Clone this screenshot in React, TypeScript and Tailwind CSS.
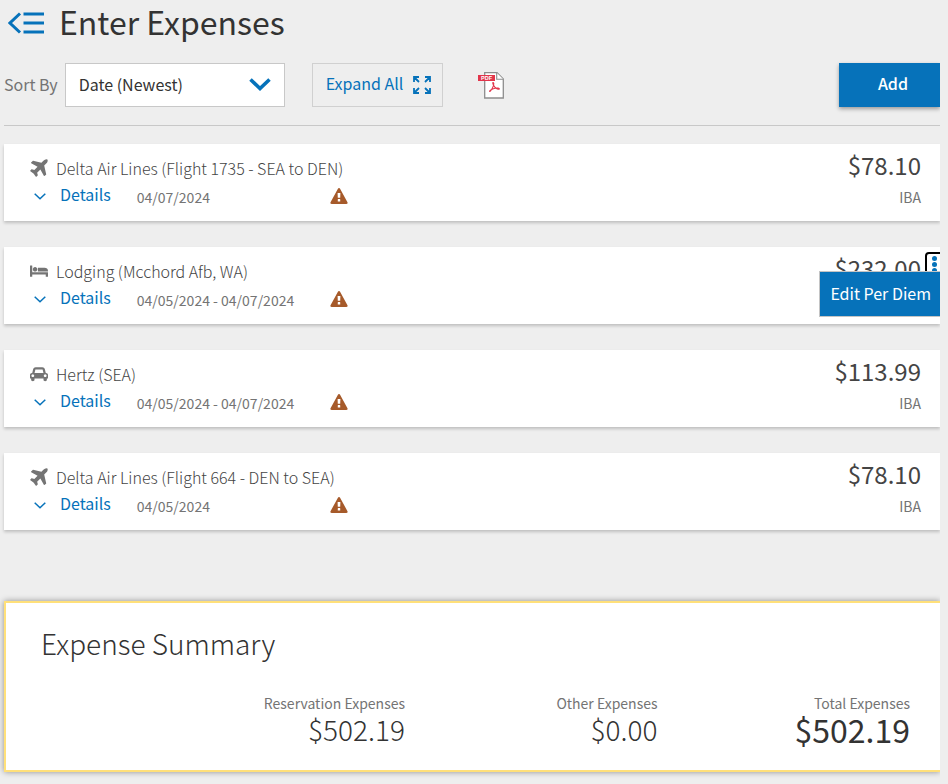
import type { ReactNode } from "react";

const shapes = {
  plane: {
    box: "176 112 1440 1440",
    d: "M1568 160q44 52 12 148t-108 172l-161 161 160 696q5 19-12 33l-128 96q-7 6-19 6-4 0-7-1-15-3-21-16l-279-508-259 259 53 194q5 17-8 31l-96 96q-9 9-23 9h-2q-15-2-24-13l-189-252-252-189q-11-7-13-23-1-13 9-25l96-97q9-9 23-9 6 0 8 1l194 53 259-259-508-279q-14-8-17-24-2-16 9-27l128-128q14-13 30-8l665 159 160-160q76-76 172-108t148 12z",
  },
  bed: {
    box: "0 0 2048 1792",
    d: "M256 1024h1728q26 0 45 19t19 45v448h-256v-256h-1536v256h-256v-1216q0-26 19-45t45-19h128q26 0 45 19t19 45v704zm576-320q0-106-75-181t-181-75-181 75-75 181 75 181 181 75 181-75 75-181zm1216 256v-64q0-159-112.5-271.5t-271.5-112.5h-704q-26 0-45 19t-19 45v384h1152z",
  },
  car: {
    box: "0 0 2048 1792",
    d: "M480 1088q0-66-47-113t-113-47-113 47-47 113 47 113 113 47 113-47 47-113zm36-320h1016l-89-357q-2-8-14-17.5t-21-9.5h-768q-9 0-21 9.5t-14 17.5zm1372 320q0-66-47-113t-113-47-113 47-47 113 47 113 113 47 113-47 47-113zm160-96v384q0 14-9 23t-23 9h-96v128q0 80-56 136t-136 56-136-56-56-136v-128h-1024v128q0 80-56 136t-136 56-136-56-56-136v-128h-96q-14 0-23-9t-9-23v-384q0-93 65.5-158.5t158.5-65.5h28l105-419q23-94 104-157.5t179-63.5h768q98 0 179 63.5t104 157.5l105 419h28q93 0 158.5 65.5t65.5 158.5z",
  },
};

type Expense = {
  kind: keyof typeof shapes;
  title: string;
  dates: string;
  amount: string;
  menu?: boolean;
};

const expenses: Expense[] = [
  { kind: "plane", title: "Delta Air Lines (Flight 1735 - SEA to DEN)", dates: "04/07/2024", amount: "$78.10" },
  { kind: "bed", title: "Lodging (Mcchord Afb, WA)", dates: "04/05/2024 - 04/07/2024", amount: "$232.00", menu: true },
  { kind: "car", title: "Hertz (SEA)", dates: "04/05/2024 - 04/07/2024", amount: "$113.99" },
  { kind: "plane", title: "Delta Air Lines (Flight 664 - DEN to SEA)", dates: "04/05/2024", amount: "$78.10" },
];

function BackIcon() {
  return (
    <svg viewBox="0 0 36 22" className="h-[22px] w-9" fill="none" stroke="#0672ba" strokeWidth="3">
      <path d="M12 1.500 2 11l10 9.500" />
      <path d="M15.500 2H36M15.500 11H36M15.500 20H36" />
    </svg>
  );
}

function ExpandIcon() {
  return (
    <svg viewBox="0 0 18 18" className="h-[18px] w-[18px]" fill="none" stroke="#0672ba" strokeWidth="1.800">
      <path d="M1 6V1h5M1 1l5 5M12 1h5v5M17 1l-5 5M1 12v5h5M1 17l5-5M12 17h5v-5M17 17l-5-5" />
    </svg>
  );
}

function PdfIcon() {
  return (
    <svg viewBox="0 0 26 27" className="h-[27px] w-[26px]">
      <path d="M6.700 .700H19l6.300 6.300v19H6.700z" fill="#fff" stroke="#8d8d8d" strokeWidth="1.300" />
      <path d="M18.700 .700v6.600h6.600" fill="#fff" stroke="#8d8d8d" strokeWidth="1.100" />
      <path d="M0 3h17v6H0z" fill="#e2354b" />
      <text x="8.500" y="8" textAnchor="middle" fontSize="5.500" fontWeight="700" fill="#fff" fontFamily="Liberation Sans, sans-serif">PDF</text>
      <path d="M15 10.500c1.500 0 .500 3.500-.700 5.700-1 1.800-2.500 4-2.700 3s3.500-2.600 5.500-3 4.600 0 4.200.8-3.200-.3-4.500-1.900-2.600-4.500-1.800-4.600z" fill="none" stroke="#e2354b" strokeWidth="1.100" />
    </svg>
  );
}

function WarningIcon() {
  return (
    <svg viewBox="0 0 1792 1664" className="mt-1 h-4 w-[18px]" fill="#a65a2a" role="img" aria-label="Warning">
      <path d="M1024 1375v-190q0-14-9.500-23.500t-22.500-9.500h-192q-13 0-22.500 9.500t-9.500 23.500v190q0 14 9.500 23.500t22.500 9.500h192q13 0 22.500-9.500t9.500-23.500zm-2-374l18-459q0-12-10-19-13-11-24-11h-220q-11 0-24 11-10 7-10 21l17 457q0 10 10 16.500t24 6.500h185q14 0 23.500-6.500t10.500-16.500zm-14-934l768 1408q35 63-2 126-17 29-46.500 46t-63.500 17h-1536q-34 0-63.500-17t-46.500-46q-37-63-2-126l768-1408q17-31 47-49t65-18 65 18 47 49z" />
    </svg>
  );
}

function RowMenu() {
  return (
    <div className="relative pt-[5px]">
      <button type="button" aria-label="More actions" className="flex h-9 w-[22px] flex-col items-center gap-px rounded border-2 border-black pt-[2px] pr-[3px]">
        {[0, 1, 2].map((dot) => (
          <span key={dot} className="h-[5px] w-[5px] rounded-full bg-[#0672ba]" />
        ))}
      </button>
      <div className="absolute top-6 right-0 border border-r-0 border-[#c4c4c4] bg-[#0672ba]">
        <button type="button" className="h-11 pr-[9px] pb-[2px] pl-[10px] text-base leading-6 whitespace-nowrap text-white">
          Edit Per Diem
        </button>
      </div>
    </div>
  );
}

function ExpenseCard({ kind, title, dates, amount, menu }: Expense) {
  const shape = shapes[kind];
  return (
    <li className="flex bg-white shadow-[0_2px_3px_rgba(0,0,0,0.2)]">
      <div className="grow pt-3 pb-[13px] pl-[26px]">
        <div className="flex items-center gap-2">
          <svg viewBox={shape.box} className="h-[18px] w-[18px]" fill="#747474">
            <path d={shape.d} />
          </svg>
          <h2 className="text-base leading-6 font-light text-[#444]">{title}</h2>
        </div>
        <div className="flex h-7 items-center">
          <button type="button" className="flex items-center gap-[14px] pl-1 text-base leading-6 text-[#0672ba]">
            <svg viewBox="0 0 12 7" className="mt-1 h-[7px] w-3" fill="none" stroke="currentColor" strokeWidth="1.500">
              <path d="m.700 .700 5.300 5 5.300-5" />
            </svg>
            Details
          </button>
          <span className="ml-[26px] w-[193px] pt-[6px] text-sm leading-5 text-[#747474]">{dates}</span>
          <WarningIcon />
        </div>
      </div>
      <div className="pt-[5px] text-right">
        <div className="text-2xl leading-8 text-[#444]">{amount}</div>
        <div className="pt-1 text-sm leading-6 text-[#747474]">IBA</div>
      </div>
      <div className="ml-1 w-[15px]">{menu && <RowMenu />}</div>
    </li>
  );
}

function Total({ label, children }: { label: string; children: ReactNode }) {
  return (
    <div className="text-right">
      <dt className="text-sm leading-5 text-[#747474]">{label}</dt>
      {children}
    </div>
  );
}

export default function App() {
  return (
    <div className="min-h-screen bg-[#eee] pr-2 font-['Noto_Sans_CJK_SC','Noto_Sans',sans-serif]">
      <main className="overflow-hidden pb-3 pl-1">
        <header className="flex h-[45px] items-center gap-[15px] pl-1">
          <button type="button" aria-label="Back to menu">
            <BackIcon />
          </button>
          <h1 className="pb-1 text-[32px] leading-10 text-[#333]">Enter Expenses</h1>
        </header>

        <div className="flex items-center border-b border-[#c8c8c8] pt-[18px] pb-[18px]">
          <label htmlFor="sort" className="pr-[7px] pb-[2px] text-base leading-6 text-[#747474]">Sort By</label>
          <div className="relative">
            <select id="sort" className="h-11 w-[220px] appearance-none border border-[#c8c8c8] bg-white pb-[2px] pl-[13px] text-base leading-6 text-[#333]">
              <option>Date (Newest)</option>
            </select>
            <svg viewBox="0 0 22 13" className="pointer-events-none absolute top-[15px] right-[14px] h-[13px] w-[22px]" fill="none" stroke="#0672ba" strokeWidth="3.600">
              <path d="m1.500 1.500 9.500 9 9.500-9" />
            </svg>
          </div>
          <button type="button" className="ml-[27px] flex h-11 items-center gap-[10px] border border-[#d0d0d0] pr-[11px] pl-[13px] text-base leading-6 text-[#0672ba]">
            <span className="pb-[5px]">Expand All</span>
            <ExpandIcon />
          </button>
          <button type="button" aria-label="Download PDF" className="ml-[35px]">
            <PdfIcon />
          </button>
          <button type="button" className="ml-auto h-11 bg-[#0672ba] pr-8 pb-1 pl-[39px] text-base leading-6 font-medium text-white shadow-[0_2px_4px_rgba(0,0,0,0.35)]">
            Add
          </button>
        </div>

        <ul className="flex flex-col gap-[26px] pt-[18px]">
          {expenses.map((expense, index) => (
            <ExpenseCard key={index} {...expense} />
          ))}
        </ul>

        <section className="mt-[71px] border-2 border-r-0 border-[#ffe07a] bg-white pt-5 pr-[30px] pb-[25px] pl-[35px] shadow-[0_0_6px_rgba(0,0,0,0.4)]">
          <h2 className="text-[28px] leading-10 font-light text-[#333]">Expense Summary</h2>
          <dl className="grid grid-cols-[364px_1fr_1fr] pt-[30px]">
            <Total label="Reservation Expenses">
              <dd className="text-[28px] leading-8 font-light text-[#333]">$502.19</dd>
            </Total>
            <Total label="Other Expenses">
              <dd className="text-[28px] leading-8 font-light text-[#333]">$0.00</dd>
            </Total>
            <Total label="Total Expenses">
              <dd className="text-[32px] leading-8 text-[#333]">$502.19</dd>
            </Total>
          </dl>
        </section>
      </main>
    </div>
  );
}
